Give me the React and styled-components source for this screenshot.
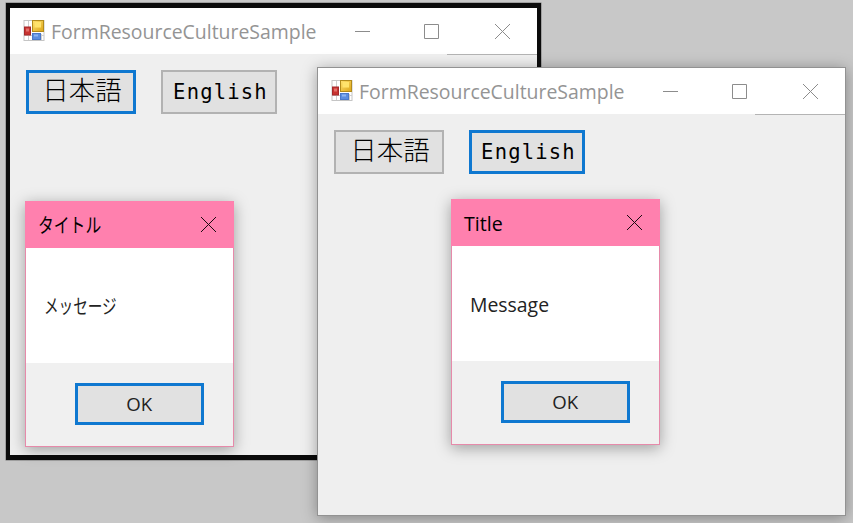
import React from "react";
import styled, { createGlobalStyle } from "styled-components";

const GlobalStyle = createGlobalStyle`
  *, *::before, *::after { box-sizing: border-box; }
  body { margin: 0; overflow: hidden; background: #c8c8c8; }
`;

const Desktop = styled.main`
  position: relative;
  width: 853px;
  height: 523px;
  overflow: hidden;
  background: #c8c8c8;
  font-family: "Open Sans", "Noto Sans CJK JP", sans-serif;
`;

const FormWindow = styled.section`
  position: absolute;
  left: ${(p) => p.$x}px;
  top: ${(p) => p.$y}px;
  width: ${(p) => p.$w}px;
  height: ${(p) => p.$h}px;
  display: flex;
  flex-direction: column;
  background: #efefef;
  border-style: solid;
  border-color: ${(p) => (p.$framed ? "#0b0b0b" : "#929292")};
  border-width: ${(p) => (p.$framed ? "5px 4px 5px 4px" : "1px")};
  box-shadow: ${(p) =>
    p.$framed ? "0 0 0 0.5px #777" : "0 2px 14px rgba(0, 0, 0, 0.34)"};
`;

const TitleBar = styled.header`
  flex: none;
  display: flex;
  align-items: center;
  justify-content: space-between;
  height: 46px;
  padding: 0 27px 0 13px;
  background: #fff;
`;

const TitleGroup = styled.div`
  display: flex;
  align-items: center;
  gap: 6px;
  width: 300px;
`;

const Logo = styled.svg`
  display: block;
  flex: none;
  width: 22px;
  height: 22px;
`;

const Controls = styled.div`
  display: flex;
  align-items: center;
  color: #8c8c8c;
`;

const ControlIcon = styled.svg`
  display: block;
  flex: none;
  width: 15px;
  height: 15px;
  margin-right: ${(p) => p.$after || 0}px;
  fill: none;
  stroke: currentColor;
  stroke-width: 1;
`;

const Label = styled.span`
  display: block;
  white-space: nowrap;
  font-family: ${(p) => p.$font || "inherit"};
  font-size: ${(p) => p.$size}px;
  font-weight: ${(p) => p.$weight || 400};
  line-height: 28px;
  letter-spacing: ${(p) => p.$spacing || 0}px;
  color: ${(p) => p.$color || "#000"};
  transform: translate(${(p) => p.$dx || 0}px, ${(p) => p.$dy || 0}px) scaleX(${(p) => p.$stretch || 1});
  transform-origin: ${(p) => p.$origin || "left"} center;
`;

const Client = styled.div`
  flex: 1;
  display: flex;
  align-items: flex-start;
  gap: 25px;
  padding: 16px;
  background: linear-gradient(#b4b4b4, #b4b4b4) right top / 90px 1px no-repeat;
`;

const Button = styled.button`
  flex: none;
  display: flex;
  align-items: center;
  justify-content: center;
  width: ${(p) => p.$w}px;
  height: ${(p) => p.$h}px;
  margin: 0;
  padding: 0;
  font-family: inherit;
  background: #e1e1e1;
  border: ${(p) => (p.$focused ? "3px solid #0f78d0" : "2px solid #b2b2b2")};
  border-radius: 0;
`;

const Dialog = styled.section`
  position: absolute;
  left: ${(p) => p.$x}px;
  top: ${(p) => p.$y}px;
  width: 209px;
  height: 246px;
  display: flex;
  flex-direction: column;
  border: 1px solid #e68aaa;
  border-top-color: #ff80ae;
  box-shadow: 0 3px 14px rgba(0, 0, 0, 0.34);
`;

const DialogBar = styled.header`
  flex: none;
  display: flex;
  align-items: center;
  justify-content: space-between;
  height: 46px;
  margin: 0 -1px;
  padding: 0 18px 2px 13px;
  color: #1a0a10;
  background: #ff80ae;
`;

const DialogBody = styled.div`
  flex: none;
  height: 115px;
  padding: 44px 18px 0;
  background: #fff;
`;

const DialogFooter = styled.footer`
  flex: 1;
  display: flex;
  justify-content: flex-end;
  align-items: flex-start;
  padding: 20px 29px 0 0;
  background: #f0f0f0;
`;

const AppIcon = () => (
  <Logo viewBox="0 0 22 22">
    <defs>
      <linearGradient id="gold" x1="0" y1="0" x2="1" y2="1">
        <stop offset="0" stopColor="#ffe070" />
        <stop offset="1" stopColor="#dda617" />
      </linearGradient>
    </defs>
    <rect x="1" y=".5" width="20" height="20" fill="#fff" stroke="#c5c5c5" />
    <path d="M5.500 1v19M1 15.500h20M18.500 14v6" stroke="#cfcfcf" />
    <rect x="9.500" y=".5" width="11" height="11" fill="url(#gold)" stroke="#b28b1c" />
    <rect x="11.500" y="2" width="6.500" height="5.500" fill="#ffe36c" />
    <rect x="1.500" y="7" width="6" height="8" fill="#c83330" stroke="#a4292b" />
    <rect x="3" y="8.500" width="3" height="3" fill="#e2706a" />
    <rect x="9.500" y="13.500" width="8" height="6" fill="#5b8de0" stroke="#4b78c9" />
    <rect x="11" y="14.500" width="4" height="2" fill="#8db4f2" />
  </Logo>
);

const CloseIcon = () => (
  <ControlIcon viewBox="0 0 15 15">
    <path d="M0 0 15 15M15 0 0 15" />
  </ControlIcon>
);

const Form = ({ culture, ...frame }) => (
  <FormWindow {...frame}>
    <TitleBar>
      <TitleGroup>
        <AppIcon />
        <Label $size={20.5} $color="#949494" $stretch={0.948}>
          FormResourceCultureSample
        </Label>
      </TitleGroup>
      <Controls>
        <ControlIcon viewBox="0 0 15 15" $after={54}>
          <path d="M0 7.500h15" />
        </ControlIcon>
        <ControlIcon viewBox="0 0 15 15" $after={56}>
          <path d="M.5.5h14v14H.5z" />
        </ControlIcon>
        <CloseIcon />
      </Controls>
    </TitleBar>
    <Client>
      <Button $w={110} $h={44} $focused={culture === "ja"}>
        <Label $size={26} $weight={300} $font={'"Noto Sans CJK JP", sans-serif'} $origin="center" $dx={1} $dy={-3} $stretch={1.02}>
          日本語
        </Label>
      </Button>
      <Button $w={116} $h={44} $focused={culture === "en"}>
        <Label $size={20.5} $spacing={1.2} $font={'"DejaVu Sans Mono", monospace'} $origin="center" $dx={1.500}>
          English
        </Label>
      </Button>
    </Client>
  </FormWindow>
);

const MessageBox = ({ x, y, title, message, titleStretch, messageStretch }) => (
  <Dialog $x={x} $y={y}>
    <DialogBar>
      <Label $size={20} $stretch={titleStretch} $dy={2}>{title}</Label>
      <CloseIcon />
    </DialogBar>
    <DialogBody>
      <Label $size={20} $color="#222" $stretch={messageStretch} $dy={1}>{message}</Label>
    </DialogBody>
    <DialogFooter>
      <Button $w={129} $h={42} $focused>
        <Label $size={19} $color="#222" $origin="center" $stretch={0.98}>OK</Label>
      </Button>
    </DialogFooter>
  </Dialog>
);

export default function App() {
  return (
    <>
      <GlobalStyle />
      <Desktop>
        <Form culture="ja" $x={6} $y={3} $w={535} $h={457} $framed />
        <MessageBox x={25} y={201} title="タイトル" message="メッセージ" titleStretch={0.79} messageStretch={0.73} />
        <Form culture="en" $x={317} $y={67} $w={529} $h={449} />
        <MessageBox x={451} y={199} title="Title" message="Message" titleStretch={0.98} messageStretch={0.97} />
      </Desktop>
    </>
  );
}
